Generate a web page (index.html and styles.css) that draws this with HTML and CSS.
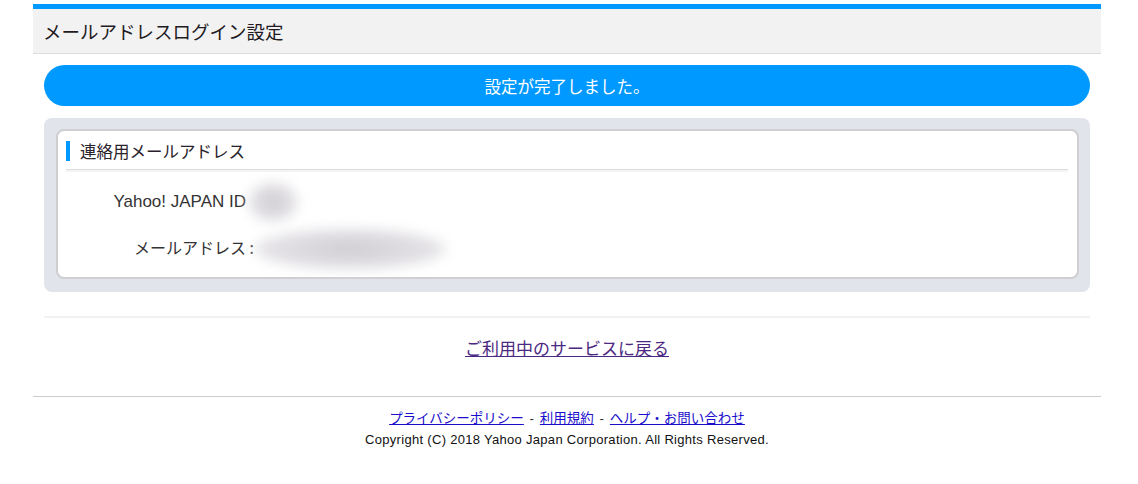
FILE: index.html
```html
<!DOCTYPE html>
<html lang="ja">
<head>
    <meta charset="UTF-8">
    <meta name="viewport" content="width=device-width, initial-scale=1.0">
    <title>メールアドレスログイン設定</title>
    <link rel="stylesheet" href="styles.css">
</head>
<body>

<div class="wrapper">
    <!-- Header -->
    <div class="page-header">
        <h1>メールアドレスログイン設定</h1>
    </div>

    <div class="main">
        <!-- Completion message -->
        <div class="done-message">設定が完了しました。</div>

        <!-- Contact address -->
        <div class="box">
            <div class="card">
                <h2 class="card-title"><span>連絡用メールアドレス</span></h2>
                <dl class="info">
                    <div class="info-row">
                        <dt class="label label-id">Yahoo! JAPAN ID</dt>
                        <dd class="value"><span class="masked masked-id"></span></dd>
                    </div>
                    <div class="info-row">
                        <dt class="label">メールアドレス :</dt>
                        <dd class="value"><span class="masked masked-mail"></span></dd>
                    </div>
                </dl>
            </div>
        </div>

        <hr class="divider">

        <p class="back"><a href="#">ご利用中のサービスに戻る</a></p>
    </div>

    <!-- Footer -->
    <div class="footer">
        <p class="footer-links">
            <a href="#">プライバシーポリシー</a> - <a href="#">利用規約</a> - <a href="#">ヘルプ・お問い合わせ</a>
        </p>
        <p class="copyright">Copyright (C) 2018 Yahoo Japan Corporation. All Rights Reserved.</p>
    </div>
</div>

</body>
</html>
```

FILE: styles.css
```css
body {
    margin: 0;
    background: #fff;
    font-family: "Noto Sans CJK JP", "Liberation Sans", sans-serif;
    color: #333;
}
.wrapper {
    width: 1068px;
    margin: 4px 0 0 33px;
}
.page-header {
    border-top: 5px solid #0099ff;
    background: #f2f2f2;
    border-bottom: 1px solid #dcdcdc;
    height: 44px;
    display: flex;
    align-items: center;
    padding-left: 10px;
}
.page-header h1 {
    margin: 0;
    font-size: 18.5px;
    font-weight: normal;
    color: #221a22;
}
.main {
    padding: 0 11px;
}
.done-message {
    margin-top: 11px;
    height: 41px;
    border-radius: 21px;
    background: #0099ff;
    color: #fff;
    font-size: 16.5px;
    display: flex;
    align-items: center;
    justify-content: center;
}
.box {
    margin-top: 12px;
    background: #e1e4ea;
    border-radius: 8px;
    padding: 11px 11px 13px 12px;
}
.card {
    background: #fff;
    border: 2px solid #cfcfd2;
    border-radius: 8px;
    padding: 10px 9px 8px 8px;
}
.card-title {
    margin: 0;
    font-size: 16.5px;
    font-weight: normal;
    line-height: 20px;
    padding-bottom: 8px;
    border-bottom: 1px solid #dcdcdc;
    box-shadow: 0 2px 0 #f4f4f4;
}
.card-title span {
    display: block;
    border-left: 4px solid #0099ff;
    padding-left: 10px;
    color: #2a222a;
}
.info {
    margin: 9px 0 0;
}
.info-row {
    display: flex;
    align-items: center;
    height: 45px;
}
.label {
    width: 188px;
    text-align: right;
    font-size: 16px;
}
.label-id {
    font-family: "Liberation Sans", "Noto Sans CJK JP", sans-serif;
    font-size: 17px;
    padding-right: 8px;
    width: 180px;
}
.value {
    margin: 0;
    position: relative;
    height: 45px;
}
.masked {
    position: absolute;
    display: block;
    background: radial-gradient(ellipse at center, #d0cdd2 0%, #e2e0e4 55%, #f5f4f6 100%);
    border-radius: 50%;
    filter: blur(6px);
}
.masked-id {
    left: -6px;
    top: 3px;
    width: 50px;
    height: 40px;
}
.masked-mail {
    left: 0;
    top: 4px;
    width: 192px;
    height: 42px;
}
.divider {
    margin: 24px 0 0;
    border: 0;
    height: 2px;
    background: #f2f2f2;
}
.back {
    margin: 0;
    padding: 20px 0 38px;
    line-height: 20px;
    text-align: center;
    font-size: 17px;
}
.back a {
    color: #4b2882;
}
.footer {
    border-top: 1px solid #cccccc;
    text-align: center;
    padding-top: 13px;
    font-family: "Liberation Sans", "Noto Sans CJK JP", sans-serif;
}
.footer p {
    margin: 0;
}
.footer-links {
    font-size: 13.5px;
    line-height: 18px;
    word-spacing: 2px;
}
.footer-links a {
    color: #1a0dcc;
}
.footer .copyright {
    margin-top: 5px;
    font-size: 13px;
    line-height: 14px;
    letter-spacing: 0.3px;
    color: #111;
}
```
